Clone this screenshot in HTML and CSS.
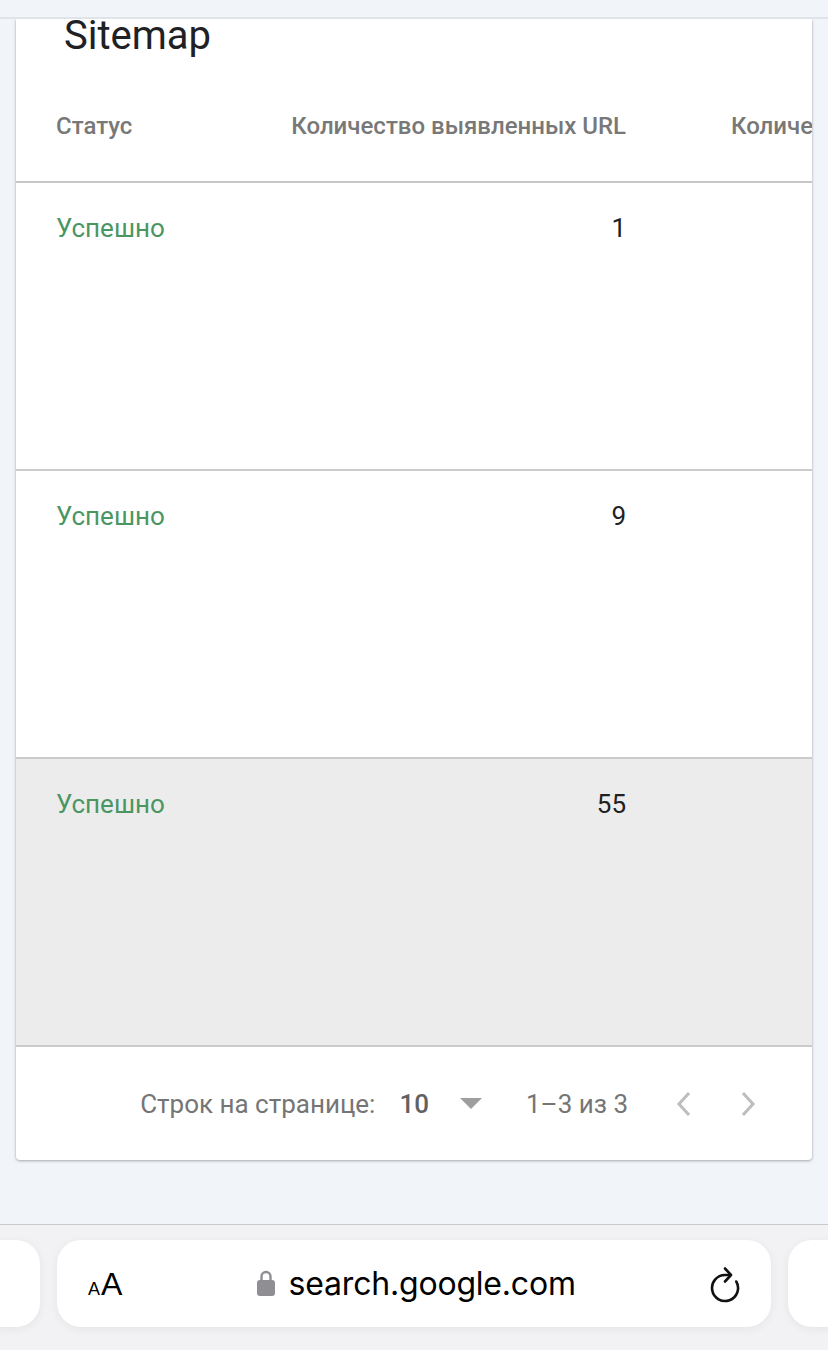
FILE: index.html
```html
<!DOCTYPE html>
<html>
    <head>
        <title>Sitemap</title>
        <meta charset="utf-8"/>
        <link rel="stylesheet" href="styles.css">
    </head>
    <body>
        <div class="top-strip"></div>
        <div class="card">
            <div class="card-title">Sitemap</div>
            <div class="row head">
                <div class="cell status">Статус</div>
                <div class="cell num">Количество выявленных URL</div>
                <div class="cell more">Количество проиндексированных URL</div>
            </div>
            <div class="row">
                <div class="cell status ok">Успешно</div>
                <div class="cell num">1</div>
                <div class="cell more"></div>
            </div>
            <div class="row">
                <div class="cell status ok">Успешно</div>
                <div class="cell num">9</div>
                <div class="cell more"></div>
            </div>
            <div class="row hover">
                <div class="cell status ok">Успешно</div>
                <div class="cell num">55</div>
                <div class="cell more"></div>
            </div>
            <div class="pager">
                <span class="pager-label">Строк на странице:</span>
                <span class="pager-size">10</span>
                <span class="pager-caret"></span>
                <span class="pager-range">1–3 из 3</span>
                <span class="pager-btn">
                    <svg width="16" height="26" viewBox="0 0 16 26"><path d="M13 2 L3 13 L13 24" fill="none" stroke="#bdbdbd" stroke-width="3"/></svg>
                </span>
                <span class="pager-btn">
                    <svg width="16" height="26" viewBox="0 0 16 26"><path d="M3 2 L13 13 L3 24" fill="none" stroke="#bdbdbd" stroke-width="3"/></svg>
                </span>
            </div>
        </div>
        <div class="safari">
            <div class="pill side left"></div>
            <div class="pill url">
                <span class="aa"><span class="small">A</span>A</span>
                <span class="address">
                    <svg class="lock" width="18" height="27" viewBox="0 0 18 27">
                        <path d="M4.5 12 V7.5 a4.5 4.5 0 0 1 9 0 V12" fill="none" stroke="#8e8e93" stroke-width="2.4"/>
                        <rect x="0" y="11" width="18" height="16" rx="3" fill="#8e8e93"/>
                    </svg>
                    search.google.com
                </span>
                <svg class="reload" width="32" height="38" viewBox="0 0 32 38">
                    <path d="M20 10 H15 A13 13 0 1 0 26.3 16.5" fill="none" stroke="#111" stroke-width="2.6" stroke-linecap="round"/>
                    <path d="M15 3.5 L21 10 L15 16.5" fill="none" stroke="#111" stroke-width="2.6" stroke-linecap="round" stroke-linejoin="round"/>
                </svg>
            </div>
            <div class="pill side right"></div>
        </div>
    </body>
</html>
```

FILE: styles.css
```css
*{
    margin: 0;
    padding: 0;
    box-sizing: border-box;
}
body{
    width: 828px;
    height: 1350px;
    overflow: hidden;
    background-color: #f1f4f9;
    font-family: Roboto, "Noto Sans", sans-serif;
}
.top-strip{
    position: relative;
    z-index: 1;
    height: 19px;
    background-color: #f1f4f9;
    border-bottom: 2px solid #e0e3e7;
}
.card{
    margin: 0 16px;
    height: 1141px;
    background-color: #fff;
    border-radius: 0 0 4px 4px;
    box-shadow: 0 1px 3px rgba(0,0,0,.3), 0 0 2px rgba(0,0,0,.08);
}
.card-title{
    font-size: 40px;
    line-height: 34px;
    color: #202124;
    padding-left: 48px;
}
.row{
    display: grid;
    grid-template-columns: 236px 374px 1fr;
    height: 288px;
    padding-top: 30px;
    border-bottom: 2px solid #cbcbcb;
    font-size: 26px;
    line-height: 30px;
    color: #212121;
}
.row.head{
    height: 130px;
    padding-top: 59px;
    font-size: 24px;
    line-height: 28px;
    font-weight: 500;
    color: #787878;
    border-bottom-color: #c6c6c6;
}
.row.hover{
    background-color: #ececec;
}
.cell{
    white-space: nowrap;
}
.status{
    padding-left: 40px;
}
.ok{
    color: #4a9663;
}
.num{
    text-align: right;
}
.more{
    padding-left: 105px;
    overflow: hidden;
}
.pager{
    height: 113px;
    display: flex;
    align-items: center;
    justify-content: flex-end;
    padding-right: 56px;
    font-size: 26px;
    color: #757575;
}
.pager-size{
    margin-left: 24px;
    font-weight: 500;
    color: #616161;
}
.pager-caret{
    width: 0;
    height: 0;
    margin-left: 31px;
    border-left: 11px solid transparent;
    border-right: 11px solid transparent;
    border-top: 11px solid #9e9e9e;
}
.pager-range{
    margin-left: 44px;
}
.pager-btn{
    display: flex;
    margin-left: 48px;
}
.safari{
    margin-top: 64px;
    height: 126px;
    border-top: 1px solid #c9c9cd;
    background-color: #f2f2f4;
    display: flex;
    gap: 17px;
    padding-top: 15px;
}
.pill{
    height: 87px;
    background-color: #fff;
    border-radius: 24px;
    box-shadow: 0 2px 10px rgba(0,0,0,.06);
}
.side{
    width: 60px;
    flex: none;
}
.side.left{
    margin-left: -20px;
}
.pill.url{
    width: 714px;
    flex: none;
    display: flex;
    align-items: center;
    padding: 0 29px 0 31px;
    font-family: Inter, "Liberation Sans", sans-serif;
    color: #000;
}
.aa{
    font-family: "Liberation Sans", sans-serif;
    font-size: 32px;
    line-height: 1;
}
.aa .small{
    font-size: 18px;
    margin-right: 1px;
}
.address{
    flex: 1;
    display: flex;
    align-items: center;
    justify-content: center;
    gap: 14px;
    font-size: 32px;
    letter-spacing: -0.2px;
}
.lock{
    display: block;
    margin-top: -2px;
}
.reload{
    display: block;
}
```
